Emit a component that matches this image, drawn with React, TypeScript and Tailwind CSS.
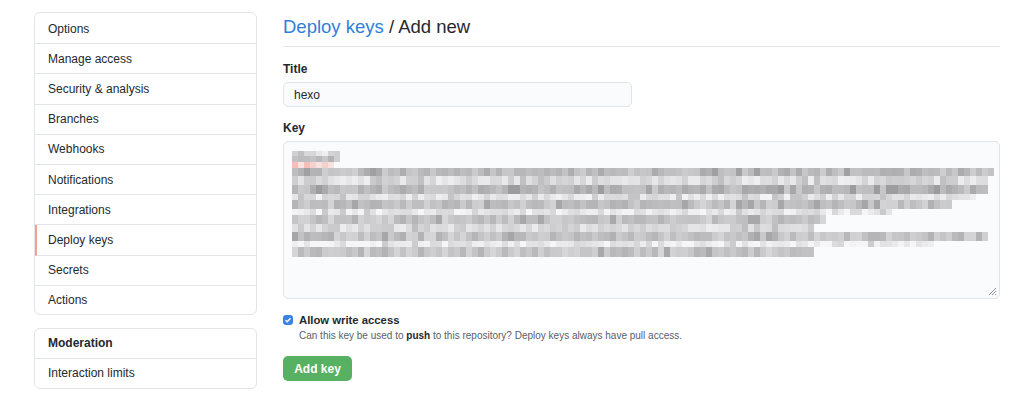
import React from 'react';

const navItems = [
    'Options',
    'Manage access',
    'Security & analysis',
    'Branches',
    'Webhooks',
    'Notifications',
    'Integrations',
    'Deploy keys',
    'Secrets',
    'Actions',
];

// rows of the pixelated (blurred) key: [y, height, xEnd, base lightness]
const keyRows: [number, number, number, number][] = [
    [0, 5, 44, 222],
    [5, 6, 44, 196],
    [11, 6, 40, 240],
    [17, 8, 702, 190],
    [25, 9, 694, 222],
    [34, 9, 694, 186],
    [43, 6, 680, 226],
    [49, 9, 660, 196],
    [58, 6, 600, 232],
    [64, 9, 530, 198],
    [73, 8, 520, 220],
    [81, 9, 694, 196],
    [90, 6, 640, 234],
    [96, 10, 522, 198],
];

function rand(seed: number) {
    const x = Math.sin(seed * 12.9898) * 43758.5453;
    return x - Math.floor(x);
}

const KeyMosaic: React.FC = () => {
    const cells: React.ReactNode[] = [];
    keyRows.forEach(([y, h, end, base], r) => {
        for (let x = 0; x < end; x += 6) {
            const n = rand(r * 1000 + x + 7);
            let v = base + Math.round((n - 0.5) * 40);
            if (n > 0.93) v = base - 30;
            v = Math.max(150, Math.min(246, v));
            const fill = r === 2 ? `rgb(246,${v - 20},${v - 24})` : `rgb(${v},${v},${v + 3})`;
            cells.push(<rect key={`${r}-${x}`} x={x} y={y} width={6} height={h} fill={fill} />);
        }
    });
    return (
        <svg width="702" height="106" viewBox="0 0 702 106">
            {cells}
        </svg>
    );
};

const App: React.FC = () => {
    return (
        <div
            className="w-[1024px] h-[405px] bg-white flex gap-[26px] pl-[34px] pr-[24px] pt-[12px] text-[#24292e]"
            style={{ fontFamily: '"Liberation Sans", Arial, sans-serif' }}
        >
            {/* Sidebar */}
            <div className="w-[223px] shrink-0 flex flex-col">
                <nav className="border border-[#e1e4e8] rounded-[6px] bg-white pt-[1px]">
                    {navItems.map((item, i) => (
                        <div
                            key={item}
                            className={
                                item === 'Deploy keys'
                                    ? 'h-[30.2px] flex items-center text-[12px] border-b border-[#e1e4e8] border-l-2 border-l-[#f3a08f] pl-[11px]'
                                    : i === navItems.length - 1
                                    ? 'h-[28px] flex items-center text-[12px] pl-[13px]'
                                    : 'h-[30.2px] flex items-center text-[12px] border-b border-[#e1e4e8] pl-[13px]'
                            }
                        >
                            {item}
                        </div>
                    ))}
                </nav>
                <nav className="mt-[13px] border border-[#e1e4e8] rounded-[6px] bg-white">
                    <div className="h-[30px] flex items-center text-[12px] font-bold border-b border-[#e1e4e8] pl-[13px]">
                        Moderation
                    </div>
                    <div className="h-[29px] flex items-center text-[12px] pl-[13px]">Interaction limits</div>
                </nav>
            </div>

            {/* Main */}
            <div className="flex-1 flex flex-col">
                <h2 className="text-[18.5px] leading-[26px] pt-[2px] pb-[6px] border-b border-[#e1e4e8]">
                    <a className="text-[#2f7fd6]">Deploy keys</a> / Add new
                </h2>

                <label className="mt-[13px] text-[12px] font-bold leading-[18px]">Title</label>
                <div className="mt-[4px] w-[349px] h-[25px] flex items-center px-[10px] text-[12px] bg-[#fafbfc] border border-[#e1e4e8] rounded-[5px]">
                    hexo
                </div>

                <label className="mt-[12px] text-[12px] font-bold leading-[18px]">Key</label>
                <div className="relative mt-[4px] h-[158px] bg-[#fafbfc] border border-[#e1e4e8] rounded-[5px] pl-[8px] pt-[9px]">
                    <KeyMosaic />
                    <svg className="absolute right-[2px] bottom-[2px]" width="10" height="10" viewBox="0 0 10 10">
                        <path d="M9 2 L2 9 M9 5 L5 9 M9 8 L8 9" stroke="#8a8f96" strokeWidth="1" />
                    </svg>
                </div>

                <div className="mt-[13px] flex items-start gap-[6px]">
                    <div className="mt-[3px] w-[10px] h-[10px] rounded-[3px] bg-[#3b82e6] flex items-center justify-center">
                        <svg width="8" height="8" viewBox="0 0 8 8">
                            <path d="M1.5 4.2 L3.2 5.8 L6.5 2.2" stroke="white" strokeWidth="1.3" fill="none" />
                        </svg>
                    </div>
                    <div className="flex flex-col">
                        <span className="text-[11.3px] font-bold leading-[16px]">Allow write access</span>
                        <span className="text-[10px] leading-[15px] text-[#586069]">
                            Can this key be used to <b className="text-[#24292e]">push</b> to this repository? Deploy keys always have pull access.
                        </span>
                    </div>
                </div>

                <button className="mt-[13px] w-[69px] h-[25px] rounded-[5px] bg-[#58b062] text-white text-[12px] font-bold">
                    Add key
                </button>
            </div>
        </div>
    );
};

export default App;
